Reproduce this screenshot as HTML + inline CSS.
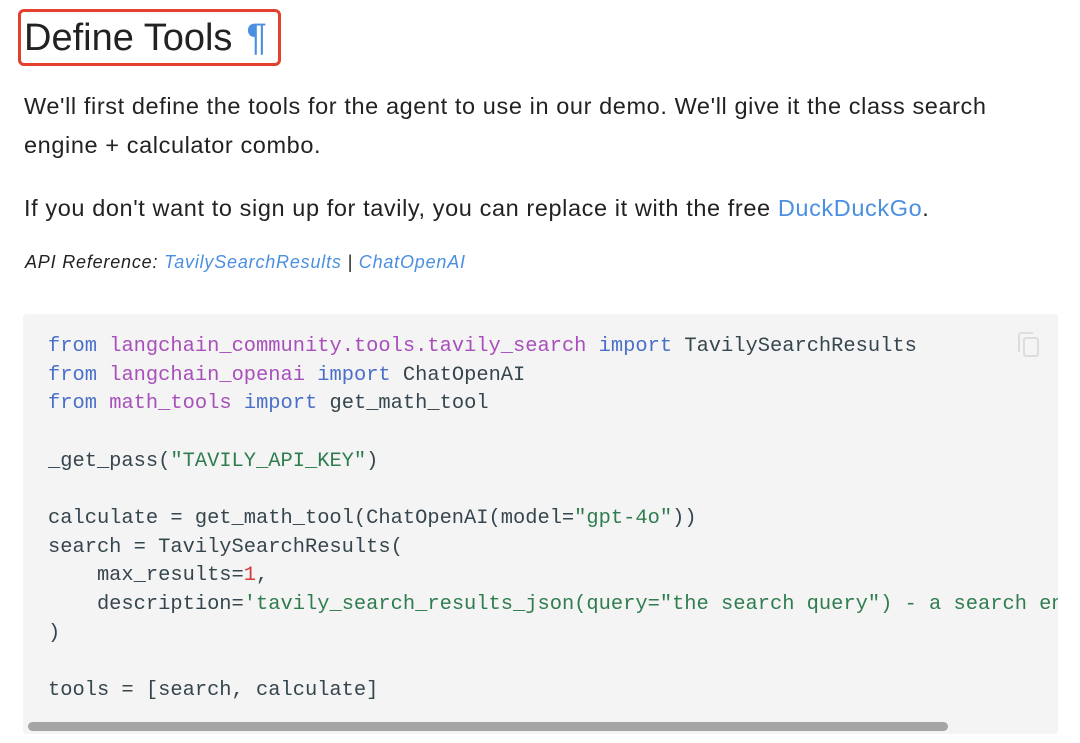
<!DOCTYPE html>
<html><head><meta charset="utf-8"><style>
html,body{margin:0;padding:0;background:#fff;width:1080px;height:743px;overflow:hidden}
body{font-family:"Liberation Sans",sans-serif;color:#222;position:relative}
.box{position:absolute;left:18px;top:9px;width:257px;height:51px;border:3px solid #e3412d;border-radius:6px}
h1{position:absolute;left:24px;top:14px;margin:0;font-weight:400;font-size:38px;line-height:48px;color:#222;white-space:nowrap}
h1 span{color:#4a8fe0;margin-left:14px}
.p{position:absolute;left:24px;font-size:23.5px;letter-spacing:0.6px;line-height:39px;white-space:nowrap}
a{color:#4a8fe0;text-decoration:none}
.api{position:absolute;left:25px;top:252px;font-size:18px;letter-spacing:0.8px;font-style:italic;white-space:nowrap}
.code{position:absolute;left:23px;top:314px;width:1035px;height:420px;background:#f4f4f4;border-radius:3px;overflow:hidden}
pre{margin:0;position:absolute;left:25px;top:19px;font-family:"Liberation Mono",monospace;font-size:20.4px;line-height:28.67px;color:#36464e}
.k{color:#4a6fc9}.m{color:#a84fbb}.s{color:#2f7d4f}.n{color:#d63a3a}.g{color:#999}
.sb{position:absolute;left:5px;top:408px;width:920px;height:9px;background:#a5a5a5;border-radius:5px}
.cp{position:absolute;left:994px;top:18px}
</style></head><body>
<div class="box"></div>
<h1>Define Tools<span>¶</span></h1>
<div class="p" style="top:87px">We'll first define the tools for the agent to use in our demo. We'll give it the class search<br>engine + calculator combo.</div>
<div class="p" style="top:189px">If you don't want to sign up for tavily, you can replace it with the free <a>DuckDuckGo</a>.</div>
<div class="api">API Reference: <a>TavilySearchResults</a> | <a>ChatOpenAI</a></div>
<div class="code">
<pre><span class="k">from</span> <span class="m">langchain_community.tools.tavily_search</span> <span class="k">import</span> TavilySearchResults
<span class="k">from</span> <span class="m">langchain_openai</span> <span class="k">import</span> ChatOpenAI
<span class="k">from</span> <span class="m">math_tools</span> <span class="k">import</span> get_math_tool

_get_pass(<span class="s">"TAVILY_API_KEY"</span>)

calculate = get_math_tool(ChatOpenAI(model=<span class="s">"gpt-4o"</span>))
search = TavilySearchResults(
    max_results=<span class="n">1</span>,
    description=<span class="s">'tavily_search_results_json(query="the search query") - a search engine.'</span>
)

tools = [search, calculate]</pre>
<svg class="cp" width="24" height="26" viewBox="0 0 24 26"><path d="M2 20V3a2 2 0 0 1 2-2h12" fill="none" stroke="#ddd" stroke-width="2"/><rect x="7" y="6" width="14" height="18" rx="2" fill="none" stroke="#ddd" stroke-width="2"/></svg>
<div class="sb"></div>
</div>
</body></html>
